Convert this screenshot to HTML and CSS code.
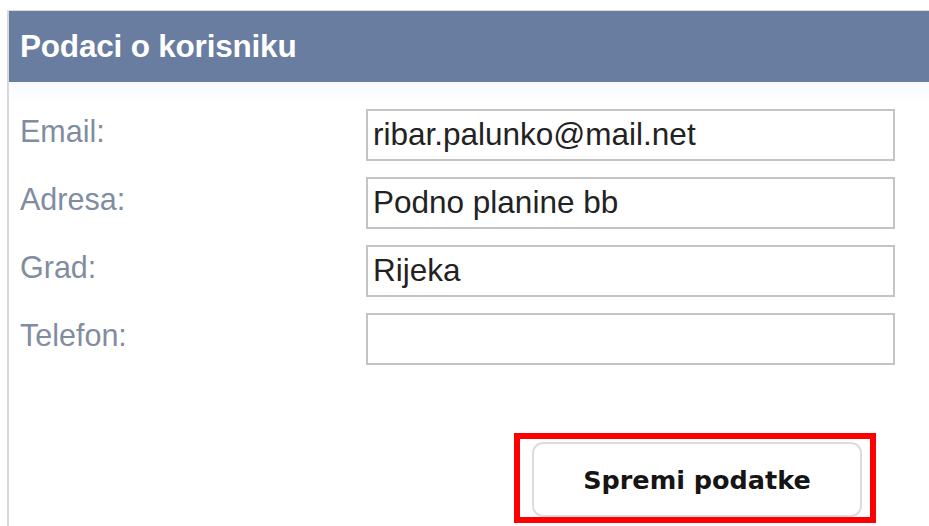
FILE: index.html
```html
<!DOCTYPE html>
<html lang="hr">
<head>
<meta charset="utf-8">
<title>Podaci o korisniku</title>
<link rel="stylesheet" href="styles.css">
</head>
<body>
  <section class="panel">
    <header class="panel-head">Podaci o korisniku</header>
    <div class="panel-body">
      <form class="user-form">
        <div class="row">
          <label class="field-label" for="email">Email:</label>
          <input class="field-input" id="email" type="text" value="ribar.palunko@mail.net">
        </div>
        <div class="row">
          <label class="field-label" for="adresa">Adresa:</label>
          <input class="field-input" id="adresa" type="text" value="Podno planine bb">
        </div>
        <div class="row">
          <label class="field-label" for="grad">Grad:</label>
          <input class="field-input" id="grad" type="text" value="Rijeka">
        </div>
        <div class="row">
          <label class="field-label" for="telefon">Telefon:</label>
          <input class="field-input" id="telefon" type="text" value="">
        </div>
        <div class="actions">
          <div class="highlight">
            <button class="save-btn" type="button">Spremi podatke</button>
          </div>
        </div>
      </form>
    </div>
  </section>
</body>
</html>
```

FILE: styles.css
```css
html, body {
  margin: 0;
  padding: 0;
  background: #ffffff;
  overflow: hidden;
}

body {
  width: 929px;
  height: 526px;
  font-family: "Liberation Sans", Arial, sans-serif;
}

.panel {
  margin: 10px 0 0 7px;
  border-left: 2px solid #d9d9d9;
  border-top: 1px solid #d9d9d9;
  height: 530px;
}

.panel-head {
  height: 71px;
  background: #687da0;
  color: #ffffff;
  font-weight: bold;
  font-size: 31.5px;
  line-height: 71px;
  padding-left: 11px;
  box-sizing: border-box;
  letter-spacing: -0.2px;
}

.panel-body {
  background: linear-gradient(#f7fafd 0, #ffffff 22px);
  padding: 27px 0 0 11px;
}

.user-form {
  display: flex;
  flex-direction: column;
  gap: 16px;
}

.row {
  display: flex;
  align-items: flex-start;
}

.field-label {
  width: 346px;
  flex: none;
  color: #808da0;
  font-size: 30.5px;
  line-height: 34px;
  padding-top: 5px;
}

.field-input {
  width: 529px;
  height: 52px;
  box-sizing: border-box;
  border: 2px solid #c4c4c4;
  padding: 0 0 2px 5px;
  margin: 0;
  font-family: "Liberation Sans", Arial, sans-serif;
  font-size: 31.5px;
  color: #222222;
  background: #ffffff;
  outline: none;
}

.actions {
  display: flex;
  padding: 52px 0 0 494px;
}

.highlight {
  border: 6px solid #ff0000;
  padding: 3px 8px 0 12px;
  display: flex;
}

.save-btn {
  width: 330px;
  height: 75px;
  border: 2px solid #dcdcdc;
  border-radius: 11px;
  background: #ffffff;
  font-family: "DejaVu Sans", Verdana, sans-serif;
  font-weight: bold;
  font-size: 25.5px;
  color: #151515;
  padding: 0;
  cursor: pointer;
}
```
